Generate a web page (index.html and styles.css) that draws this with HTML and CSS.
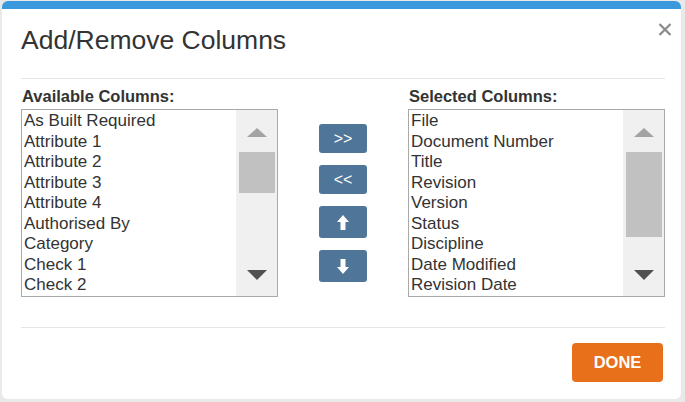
FILE: index.html
```html
<!DOCTYPE html>
<html lang="en">
<head>
    <meta charset="UTF-8">
    <title>Add/Remove Columns</title>
    <link rel="stylesheet" href="styles.css">
</head>
<body>
    <div class="modal">
        <div class="modal-header">
            <h2 class="modal-title">Add/Remove Columns</h2>
        </div>
        <button class="close-btn" aria-label="Close">
            <svg width="14" height="13" viewBox="0 0 14 13">
                <path d="M1.5 1 L12.5 12 M12.5 1 L1.5 12" stroke="#8a8a8a" stroke-width="2.2" fill="none"/>
            </svg>
        </button>

        <div class="modal-body">
            <div class="column">
                <div class="list-label">Available Columns:</div>
                <div class="listbox">
                    <div class="list-items">
                        <div class="list-item">As Built Required</div>
                        <div class="list-item">Attribute 1</div>
                        <div class="list-item">Attribute 2</div>
                        <div class="list-item">Attribute 3</div>
                        <div class="list-item">Attribute 4</div>
                        <div class="list-item">Authorised By</div>
                        <div class="list-item">Category</div>
                        <div class="list-item">Check 1</div>
                        <div class="list-item">Check 2</div>
                    </div>
                    <div class="scrollbar">
                        <div class="scroll-up"><span class="arrow-up"></span></div>
                        <div class="scroll-track"><div class="scroll-thumb" style="height: 41px"></div></div>
                        <div class="scroll-down"><span class="arrow-down"></span></div>
                    </div>
                </div>
            </div>

            <div class="move-buttons">
                <button class="move-btn short">&gt;&gt;</button>
                <button class="move-btn short">&lt;&lt;</button>
                <button class="move-btn tall">
                    <svg width="12" height="15" viewBox="0 0 12 15">
                        <polygon points="6,0 12,7 8.5,7 8.5,15 3.5,15 3.5,7 0,7" fill="#fff"/>
                    </svg>
                </button>
                <button class="move-btn tall">
                    <svg width="12" height="15" viewBox="0 0 12 15">
                        <polygon points="6,15 12,8 8.5,8 8.5,0 3.5,0 3.5,8 0,8" fill="#fff"/>
                    </svg>
                </button>
            </div>

            <div class="column">
                <div class="list-label">Selected Columns:</div>
                <div class="listbox">
                    <div class="list-items">
                        <div class="list-item">File</div>
                        <div class="list-item">Document Number</div>
                        <div class="list-item">Title</div>
                        <div class="list-item">Revision</div>
                        <div class="list-item">Version</div>
                        <div class="list-item">Status</div>
                        <div class="list-item">Discipline</div>
                        <div class="list-item">Date Modified</div>
                        <div class="list-item">Revision Date</div>
                    </div>
                    <div class="scrollbar">
                        <div class="scroll-up"><span class="arrow-up"></span></div>
                        <div class="scroll-track"><div class="scroll-thumb" style="height: 85px"></div></div>
                        <div class="scroll-down"><span class="arrow-down"></span></div>
                    </div>
                </div>
            </div>
        </div>

        <div class="modal-footer">
            <button class="done-btn">DONE</button>
        </div>
    </div>
</body>
</html>
```

FILE: styles.css
```css
body {
    margin: 0;
    padding: 1px 0 0 2px;
    background-color: #e9e9e9;
    font-family: 'Liberation Sans', Arial, sans-serif;
    color: #333;
}

.modal {
    position: relative;
    width: 679px;
    box-sizing: border-box;
    background: #fff;
    border-top: 8px solid #3a99dc;
    border-radius: 6px;
}

.modal-header {
    margin: 0 16px 0 19px;
    padding: 16px 0 23px;
    border-bottom: 1px solid #e5e5e5;
}

.modal-title {
    margin: 0;
    font-size: 26.5px;
    line-height: 30px;
    font-weight: normal;
    color: #333;
}

.close-btn {
    position: absolute;
    top: 14px;
    right: 9px;
    padding: 0;
    border: none;
    background: transparent;
    line-height: 0;
    cursor: pointer;
}

.modal-body {
    display: grid;
    grid-template-columns: 1fr 48px 1fr;
    column-gap: 41px;
    padding: 8px 16px 30px 19px;
}

.list-label {
    font-size: 16.5px;
    font-weight: bold;
    line-height: 19px;
    margin-bottom: 3px;
    padding-left: 1px;
}

.listbox {
    display: flex;
    height: 188px;
    box-sizing: border-box;
    border: 1px solid #a9a9a9;
    background: #fff;
}

.list-items {
    flex: 1;
    overflow: hidden;
    padding: 1px 0 0 2px;
    font-size: 17px;
    line-height: 20.5px;
    white-space: nowrap;
}

.scrollbar {
    width: 41px;
    display: flex;
    flex-direction: column;
    background: #f0f0f0;
}

.scroll-up,
.scroll-down {
    height: 42px;
    box-sizing: border-box;
    display: flex;
    justify-content: center;
    align-items: center;
}

.scroll-up {
    padding-top: 3px;
}

.arrow-up {
    width: 0;
    height: 0;
    border-left: 10px solid transparent;
    border-right: 10px solid transparent;
    border-bottom: 9px solid #a3a3a3;
}

.arrow-down {
    width: 0;
    height: 0;
    border-left: 10px solid transparent;
    border-right: 10px solid transparent;
    border-top: 10px solid #505050;
}

.scroll-track {
    flex: 1;
}

.scroll-thumb {
    margin: 0 2px 0 3px;
    background: #c1c1c1;
}

.move-buttons {
    display: flex;
    flex-direction: column;
    gap: 12px;
    padding-top: 37px;
}

.move-btn {
    width: 48px;
    padding: 0;
    border: none;
    border-radius: 3px;
    background: #4f7598;
    color: #fff;
    font-family: 'Liberation Sans', Arial, sans-serif;
    font-size: 16px;
    line-height: 1;
    cursor: pointer;
}

.move-btn.short {
    height: 29px;
}

.move-btn.tall {
    height: 32px;
}

.move-btn svg {
    display: block;
    margin: 0 auto;
}

.modal-footer {
    margin: 0 16px 0 19px;
    padding: 15px 0 17px;
    border-top: 1px solid #e5e5e5;
    text-align: right;
}

.done-btn {
    width: 91px;
    height: 39px;
    margin-right: 2px;
    border: none;
    border-radius: 4px;
    background: #e8701a;
    color: #fff;
    font-family: 'Liberation Sans', Arial, sans-serif;
    font-size: 16.5px;
    font-weight: bold;
    vertical-align: top;
    cursor: pointer;
}
```
